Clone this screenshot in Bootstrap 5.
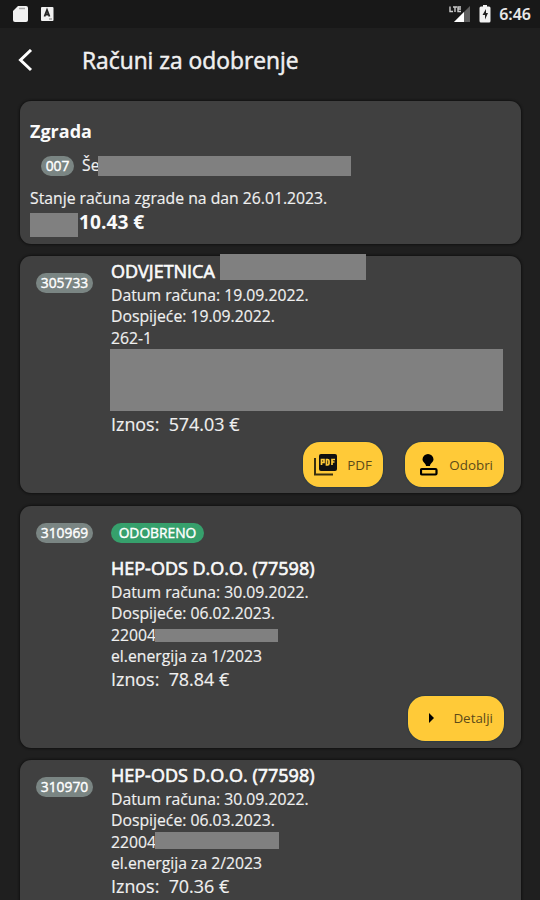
<!DOCTYPE html>
<html lang="hr">
<head>
<meta charset="utf-8">
<meta name="viewport" content="width=device-width, initial-scale=1">
<title>Računi za odobrenje</title>
<link href="https://cdn.jsdelivr.net/npm/bootstrap@5.3.0/dist/css/bootstrap.min.css" rel="stylesheet">
<style>
body{background:#1f1f1f;color:#f0f0f0;font-family:"Open Sans","Noto Sans",sans-serif;height:900px;overflow:hidden}
.status{height:28px;background:#181818;padding:0 9px 0 13px}
.clock{font-family:"Noto Sans",sans-serif;font-size:16px;font-weight:600;line-height:28px;color:#e8e8e8}
.topbar{height:73px;padding:0 18px 8px}
.topbar h1{font-size:22.8px;font-weight:400;-webkit-text-stroke:.5px #f0f0f0;margin:0 0 0 48px}
.panel{background:#404040;border:0;border-radius:11px;margin:0 19px 0 20px;box-shadow:0 0 2px 1px #121212;color:#f0f0f0}
.p-sum{height:143px;padding:18px 10px 0;margin-bottom:12px}
.p-a{height:237px;margin-bottom:13px}
.p-b{height:242px;margin-bottom:12px}
.p-c{height:170px}
.invoice{padding:3px 16px 0 16px}
.side{width:75px;flex:none}
.pill{display:inline-block;height:20px;line-height:20px;border-radius:10px;background:#7a8583;color:#fff;font-size:13.8px;-webkit-text-stroke:.4px #fff;text-align:center;width:57px}
.p7{width:33px;margin-left:-1px}
.ok{background:#36a06c;width:93px}
.t{font-size:18px;font-weight:400;-webkit-text-stroke:.65px #fafafa;line-height:25px;height:25px;white-space:nowrap;color:#fafafa}
.b{font-weight:700;-webkit-text-stroke:0;line-height:24px;height:24px}
.sum{font-size:19.2px;line-height:24px}
.l{font-size:15.75px;line-height:21.4px;height:21.4px;white-space:pre;-webkit-text-stroke:.15px #f0f0f0}
.t + .l{margin-top:1px}
.amt{font-size:17.9px;line-height:24px;height:24px;margin-top:-1px;white-space:pre;-webkit-text-stroke:.15px #f0f0f0}
.mask{background:#808080;flex:none}
.act{background:#ffca38;border-radius:17px;height:45px;font-size:13.4px;color:#5c4a18;padding:0 10px;box-shadow:0 0 1px 1px #303d43}
.act svg{flex:none}
.m1{width:253px;height:20px;margin-left:-1px}.m2{width:48px;height:24px;margin:3px 1px 0 0}
.m3{width:146px;height:26px;margin:-5px 0 0 0}
.m4{width:393px;height:62px;margin:0 0 2px -1px}
.m5{width:123px;height:13px}.m6{width:124px;height:17px;margin-top:-3px}
.cut{width:44px}
.name{width:109px}
.acts{margin:6px 17px 0 0;gap:22px}
.pdf{width:80px}.odo{width:99px}.det{width:96px;padding-left:19px}
.p-b .side,.state{padding-top:11px}.state{height:47px}
.p-b .acts{margin-top:5px}
.lift{margin-top:14px}
</style>
</head>
<body>
<header>
<div class="status d-flex align-items-center justify-content-between">
 <div class="d-flex align-items-center">
  <svg width="16" height="18" viewBox="0 0 16 18"><path d="M5 1h8q2 0 2 2v12q0 2-2 2H2q-2 0-2-2V6z" fill="#f2f2f2"/><path d="M6 3.500h6" stroke="#aaa" stroke-width="1.500"/></svg>
  <svg class="ms-2" width="20" height="18" viewBox="0 0 20 18"><rect x="4" y="2" width="12.500" height="14" rx="1" fill="#f0f0f0"/><path d="M7.500 11.500L10 5l2.500 6.500M8.500 9.500h3" fill="none" stroke="#222" stroke-width="1.800"/><path d="M12 14h3" stroke="#777"/></svg>
 </div>
 <div class="d-flex align-items-center">
  <svg width="22" height="18" viewBox="0 0 22 18"><path d="M21 1v16H5z" fill="#606060"/><path d="M15 7v10H5z" fill="#fff"/><path d="M1 1.500v5h3M4 2h4M6 2v5M12 2H9v4.500h3M9 4h3" stroke="#ccc" stroke-width="1.400" fill="none"/></svg>
  <svg class="mx-2" width="12" height="18" viewBox="0 0 12 18"><path d="M4 0h4v1.500h2q1.500 0 1.500 1.500v13q0 1.500-1.500 1.500H2Q.5 17.500.5 16V3Q.5 1.500 2 1.500h2z" fill="#f2f2f2"/><path d="M7 4L3.500 10H6v4.500L9 8H7z" fill="#222"/></svg>
  <span class="clock">6:46</span>
 </div>
</div>
<div class="topbar d-flex align-items-center">
 <svg width="16" height="24" viewBox="0 0 16 24"><path d="M13 1L2.500 11l10.500 10" fill="none" stroke="#fff" stroke-width="3"/></svg>
 <h1>Računi za odobrenje</h1>
</div>
</header>
<main>
<section class="panel card p-sum">
 <div class="t b">Zgrada</div>
 <div class="d-flex align-items-center ms-2 ps-1 mt-2 pt-1">
  <span class="pill p7">007</span><span class="l ms-2">Še</span><span class="mask m1"></span>
 </div>
 <div class="l mt-2 pt-1">Stanje računa zgrade na dan 26.01.2023.</div>
 <div class="d-flex pt-1"><span class="mask m2"></span><span class="t b sum">10.43 €</span></div>
</section>

<section class="panel card p-a">
 <div class="invoice d-flex">
  <div class="side"><span class="pill lift">305733</span></div>
  <div>
   <div class="t d-flex"><span class="name">ODVJETNICA</span><span class="mask m3"></span></div>
   <div class="l">Datum računa: 19.09.2022.</div>
   <div class="l">Dospijeće: 19.09.2022.</div>
   <div class="l">262-1</div>
   <div class="mask m4"></div>
   <div class="amt">Iznos:  574.03 €</div>
  </div>
 </div>
 <div class="d-flex justify-content-end acts">
  <button class="act btn d-flex align-items-center justify-content-between pdf">
   <svg width="25" height="24" viewBox="1 0 25 24"><path d="M2 5v16.500h18" fill="none" stroke="#3a3010" stroke-width="2"/><rect x="6" y="1" width="18" height="17" rx="2" fill="#111"/><path d="M8.500 12V6.500h2.500v3H8.500M13.500 6.500V12h1q1.500 0 1.500-1.500V8q0-1.500-1.500-1.500zM19 12V6.500h3M19 9h2.500" fill="none" stroke="#ffca38" stroke-width="1.700"/></svg><span>PDF</span></button>
  <button class="act btn d-flex align-items-center justify-content-between odo">
   <svg class="ms-1" width="20" height="24" viewBox="2 0 20 24"><path d="M10 1a5.500 5.500 0 0 1 5.500 5.200c0 3-3.500 4-3.500 6.800H8c0-2.800-3.500-3.800-3.500-6.800A5.500 5.500 0 0 1 10 1z" fill="#000"/><rect x="3" y="16" width="15.500" height="5.500" rx="1" fill="none" stroke="#000" stroke-width="2.200"/></svg><span>Odobri</span></button>
 </div>
</section>

<section class="panel card p-b">
 <div class="invoice d-flex">
  <div class="side"><span class="pill">310969</span></div>
  <div>
   <div class="state"><span class="pill ok">ODOBRENO</span></div>
   <div class="t">HEP-ODS D.O.O. (77598)</div>
   <div class="l">Datum računa: 30.09.2022.</div>
   <div class="l">Dospijeće: 06.02.2023.</div>
   <div class="l d-flex align-items-center"><span class="cut">22004</span><span class="mask m5"></span></div>
   <div class="l">el.energija za 1/2023</div>
   <div class="amt">Iznos:  78.84 €</div>
  </div>
 </div>
 <div class="d-flex justify-content-end acts">
  <button class="act btn d-flex align-items-center justify-content-between det">
   <svg width="7" height="12" viewBox="0 0 7 12"><path d="M1 1l5 5-5 5z" fill="#000"/></svg><span>Detalji</span></button>
 </div>
</section>

<section class="panel card p-c">
 <div class="invoice d-flex">
  <div class="side"><span class="pill lift">310970</span></div>
  <div>
   <div class="t">HEP-ODS D.O.O. (77598)</div>
   <div class="l">Datum računa: 30.09.2022.</div>
   <div class="l">Dospijeće: 06.03.2023.</div>
   <div class="l d-flex align-items-center"><span class="cut">22004</span><span class="mask m6"></span></div>
   <div class="l">el.energija za 2/2023</div>
   <div class="amt">Iznos:  70.36 €</div>
  </div>
 </div>
</section>
</main>
<script src="https://cdn.jsdelivr.net/npm/bootstrap@5.3.0/dist/js/bootstrap.bundle.min.js"></script>
</body>
</html>
